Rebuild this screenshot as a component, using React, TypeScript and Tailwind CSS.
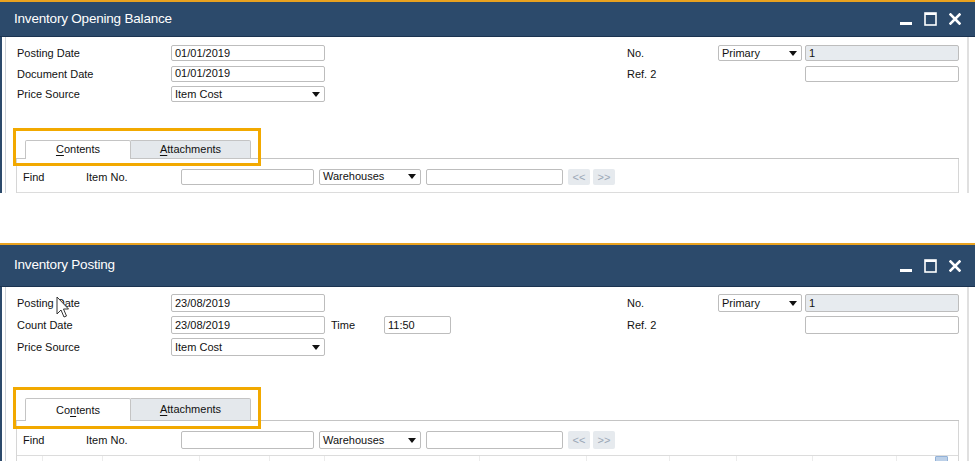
import React from 'react';

type Cfg = {
  title: string;
  panelH: string;
  titleH: string;
  fieldH: string;
  bodyPt: string;
  tabsMt: string;
  tabH: string;
  findPt: string;
  gridMt: string;
  ringTop: string;
  ringH: string;
  withTime?: boolean;
  ulIndex: number;
  cols: number[];
  cursor?: boolean;
};

const font = "font-['Liberation_Sans',Arial,sans-serif]";

function Caret() {
  return (
    <svg width="8" height="5" viewBox="0 0 8 5" className="shrink-0">
      <path d="M0 0 H8 L4 5 Z" fill="#111" />
    </svg>
  );
}

function Field({ w, h, grey, caret, children }: { w: string; h: string; grey?: boolean; caret?: boolean; children?: React.ReactNode }) {
  return (
    <div
      className={`${w} ${h} shrink-0 flex items-center justify-between border border-[#bdbdbd] rounded-[2px] pl-[3px] pr-[4px] text-[11px] text-[#111] ${grey ? 'bg-[#e7ebef]' : 'bg-white'}`}
    >
      <span className="leading-none">{children}</span>
      {caret && <Caret />}
    </div>
  );
}

function WindowButtons() {
  return (
    <div className="flex items-center gap-[12px]">
      <svg width="12" height="14" viewBox="0 0 12 14">
        <rect x="0" y="10" width="12" height="3" fill="#fff" />
      </svg>
      <svg width="13" height="14" viewBox="0 0 13 14">
        <rect x="1" y="1" width="11" height="12" fill="none" stroke="#fff" strokeWidth="1.6" />
        <rect x="1" y="1" width="11" height="2" fill="#fff" />
      </svg>
      <svg width="12" height="12" viewBox="0 0 12 12">
        <path d="M1.5 1.5 L10.5 10.5 M10.5 1.5 L1.5 10.5" stroke="#fff" strokeWidth="2.6" strokeLinecap="square" />
      </svg>
    </div>
  );
}

function Cursor() {
  return (
    <svg width="14" height="22" viewBox="0 0 14 22" className="absolute left-[56px] top-[53px]">
      <path d="M1 1 L1 18 L5 14 L8 21 L10.5 20 L7.5 13 L12.5 13 Z" fill="#fff" stroke="#333" strokeWidth="1" strokeLinejoin="round" />
    </svg>
  );
}

function Panel(c: Cfg) {
  const contents = 'Contents'.split('');
  return (
    <div className={`relative flex flex-col overflow-hidden ${c.panelH}`}>
      <div className="h-[2px] bg-[#e9a21f]" />
      <div className={`${c.titleH} shrink-0 bg-[#2c4a6b] border-b border-[#1b3350] flex items-center justify-between pl-[14px] pr-[14px]`}>
        <span className={`${font} text-[13.5px] tracking-[-0.2px] text-white`}>{c.title}</span>
        <WindowButtons />
      </div>

      <div className="flex flex-1 min-h-0">
        <div className="w-[2px] bg-[#2c4a6b]" />
        <div className="w-[3px]" />
        <div className="w-px bg-[#cfd3d8]" />

        <div className={`flex-1 min-w-0 flex flex-col ${font} text-[11px] text-[#111]`}>
          {/* header fields */}
          <div className={`flex ${c.bodyPt} pl-[11px] pr-[8px]`}>
            <div className="flex flex-col gap-[4px]">
              <div className="flex items-center">
                <span className="w-[154px]">Posting Date</span>
                <Field w="w-[154px]" h={c.fieldH}>{c.withTime ? '23/08/2019' : '01/01/2019'}</Field>
              </div>
              <div className="flex items-center">
                <span className="w-[154px]">{c.withTime ? 'Count Date' : 'Document Date'}</span>
                <Field w="w-[154px]" h={c.fieldH}>{c.withTime ? '23/08/2019' : '01/01/2019'}</Field>
                {c.withTime && (
                  <>
                    <span className="w-[53px] ml-[6px]">Time</span>
                    <Field w="w-[67px]" h={c.fieldH}>11:50</Field>
                  </>
                )}
              </div>
              <div className="flex items-center">
                <span className="w-[154px]">Price Source</span>
                <Field w="w-[154px]" h={c.fieldH} caret>Item Cost</Field>
              </div>
            </div>

            <div className="ml-auto flex flex-col gap-[4px]">
              <div className="flex items-center">
                <span className="w-[91px]">No.</span>
                <Field w="w-[84px]" h={c.fieldH} caret>Primary</Field>
                <div className="w-[3px]" />
                <Field w="w-[154px]" h={c.fieldH} grey>1</Field>
              </div>
              <div className="flex items-center">
                <span className="w-[91px]">Ref. 2</span>
                <div className="w-[87px]" />
                <Field w="w-[154px]" h={c.fieldH} />
              </div>
            </div>
          </div>

          {/* tabs */}
          <div className={`${c.tabsMt} ml-[10px] mr-[8px] flex flex-col`}>
            <div className={`flex items-stretch ${c.tabH}`}>
              <div className="w-[9px] border-b border-[#c4c4c4]" />
              <div className="w-[106px] bg-white border border-b-0 border-[#c4c4c4] rounded-t-[2px] flex items-center justify-center">
                <span>
                  {contents.map((ch, i) => (
                    <span key={i} className={i === c.ulIndex ? 'underline underline-offset-2' : ''}>{ch}</span>
                  ))}
                </span>
              </div>
              <div className="w-[120px] bg-[#e4e8ec] border border-l-0 border-[#c4c4c4] rounded-tr-[2px] flex items-center justify-center">
                <span><span className="underline underline-offset-2">A</span>ttachments</span>
              </div>
              <div className="flex-1 border-b border-[#c4c4c4]" />
            </div>

            <div className="border-l border-r border-[#d6d6d6] flex flex-col">
              <div className={`flex items-center ${c.findPt} pl-[6px]`}>
                <span className="w-[63px]">Find</span>
                <span className="w-[95px]">Item No.</span>
                <Field w="w-[133px]" h={c.fieldH} />
                <div className="w-[5px]" />
                <Field w="w-[102px]" h={c.fieldH} caret>Warehouses</Field>
                <div className="w-[5px]" />
                <Field w="w-[137px]" h={c.fieldH} />
                <div className="w-[5px]" />
                <div className={`w-[22px] ${c.fieldH} bg-[#e6eaee] rounded-[2px] flex items-center justify-center text-[11px] text-[#9ba7b6]`}>&lt;&lt;</div>
                <div className="w-[3px]" />
                <div className={`w-[22px] ${c.fieldH} bg-[#e6eaee] rounded-[2px] flex items-center justify-center text-[11px] text-[#9ba7b6]`}>&gt;&gt;</div>
              </div>
              <div className={`${c.gridMt} h-[12px] border-t border-[#dcdcdc] flex`}>
                {c.cols.map((w, i) => (
                  <div key={i} className="border-r border-[#ececec]" style={{ width: w }} />
                ))}
                <div className="ml-auto mr-[10px] w-[13px] h-[9px] bg-[#bcd0e8] border border-[#93b2d8] rounded-[1px]" />
              </div>
            </div>
          </div>
        </div>

        <div className="w-[2px] bg-[#e0e0e0]" />
        <div className="w-[6px]" />
      </div>

      {/* highlight box */}
      <div className={`absolute left-[13px] ${c.ringTop} w-[248px] ${c.ringH} border-[3px] border-[#f2a900]`} />
      {c.cursor && <Cursor />}
    </div>
  );
}

export default function App() {
  return (
    <div className="w-[975px] h-[461px] bg-white overflow-hidden">
      <Panel
        title="Inventory Opening Balance"
        panelH="h-[193px]"
        titleH="h-[35px]"
        fieldH="h-[16px]"
        bodyPt="pt-[8px]"
        tabsMt="mt-[37px]"
        tabH="h-[19px]"
        findPt="pt-[10px]"
        gridMt="mt-[7px]"
        ringTop="top-[128px]"
        ringH="h-[38px]"
        ulIndex={0}
        cols={[26, 87, 120, 91, 110, 111, 111, 110, 110]}
      />
      <div className="h-[50px]" />
      <Panel
        title="Inventory Posting"
        panelH="h-[218px]"
        titleH="h-[42px]"
        fieldH="h-[18px]"
        bodyPt="pt-[7px]"
        tabsMt="mt-[42px]"
        tabH="h-[23px]"
        findPt="pt-[10px]"
        gridMt="mt-[6px]"
        ringTop="top-[144px]"
        ringH="h-[42px]"
        withTime
        ulIndex={2}
        cols={[26, 60, 97, 70, 55, 155, 107, 83, 67, 76, 84]}
        cursor
      />
    </div>
  );
}
